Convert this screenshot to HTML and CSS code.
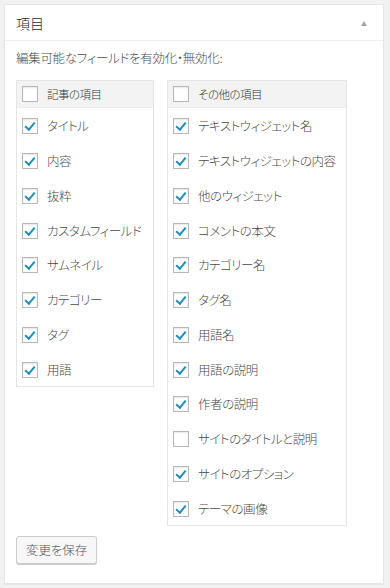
FILE: index.html
```html
<!DOCTYPE html>
<html lang="ja">
<head>
<meta charset="utf-8">
<link rel="stylesheet" href="styles.css">
</head>
<body>
<div class="postbox">
  <div class="postbox-header">
    <h2 class="postbox-title">項目</h2>
    <span class="toggle-arrow"></span>
  </div>
  <div class="postbox-inside">
    <p class="field-label">編集可能なフィールドを有効化・無効化:</p>
    <div class="tables">
      <div class="field-table table-left">
        <div class="table-head"><span class="cb"></span><span class="head-text">記事の項目</span></div>
        <div class="table-body">
          <div class="row"><span class="cb checked"></span><span class="row-text">タイトル</span></div>
          <div class="row"><span class="cb checked"></span><span class="row-text">内容</span></div>
          <div class="row"><span class="cb checked"></span><span class="row-text">抜粋</span></div>
          <div class="row"><span class="cb checked"></span><span class="row-text">カスタムフィールド</span></div>
          <div class="row"><span class="cb checked"></span><span class="row-text">サムネイル</span></div>
          <div class="row"><span class="cb checked"></span><span class="row-text">カテゴリー</span></div>
          <div class="row"><span class="cb checked"></span><span class="row-text">タグ</span></div>
          <div class="row"><span class="cb checked"></span><span class="row-text">用語</span></div>
        </div>
      </div>
      <div class="field-table table-right">
        <div class="table-head"><span class="cb"></span><span class="head-text">その他の項目</span></div>
        <div class="table-body">
          <div class="row"><span class="cb checked"></span><span class="row-text">テキストウィジェット名</span></div>
          <div class="row"><span class="cb checked"></span><span class="row-text">テキストウィジェットの内容</span></div>
          <div class="row"><span class="cb checked"></span><span class="row-text">他のウィジェット</span></div>
          <div class="row"><span class="cb checked"></span><span class="row-text">コメントの本文</span></div>
          <div class="row"><span class="cb checked"></span><span class="row-text">カテゴリー名</span></div>
          <div class="row"><span class="cb checked"></span><span class="row-text">タグ名</span></div>
          <div class="row"><span class="cb checked"></span><span class="row-text">用語名</span></div>
          <div class="row"><span class="cb checked"></span><span class="row-text">用語の説明</span></div>
          <div class="row"><span class="cb checked"></span><span class="row-text">作者の説明</span></div>
          <div class="row"><span class="cb"></span><span class="row-text">サイトのタイトルと説明</span></div>
          <div class="row"><span class="cb checked"></span><span class="row-text">サイトのオプション</span></div>
          <div class="row"><span class="cb checked"></span><span class="row-text">テーマの画像</span></div>
        </div>
      </div>
    </div>
    <button class="button" type="button">変更を保存</button>
  </div>
</div>
</body>
</html>
```
FILE: styles.css
```css
html, body {
  margin: 0;
  padding: 0;
  background: #f1f1f1;
}
body {
  padding: 4px 6px 4px 4px;
  font-family: "Noto Sans CJK JP", "Noto Sans", sans-serif;
  font-feature-settings: "palt";
  font-weight: 300;
  color: #4a4a4a;
  font-size: 13px;
}
.postbox {
  background: #fff;
  border: 1px solid #e5e5e5;
  box-shadow: 0 1px 1px rgba(0,0,0,.04);
}
.postbox-header {
  height: 35px;
  display: flex;
  align-items: center;
  justify-content: space-between;
  padding: 0 16px 0 11px;
  border-bottom: 1px solid #eee;
}
.postbox-title {
  margin: 0;
  font-size: 14px;
  font-weight: 300;
  line-height: 20px;
  color: #23282d;
}
.toggle-arrow {
  width: 0;
  height: 0;
  border-left: 3.5px solid transparent;
  border-right: 3.5px solid transparent;
  border-bottom: 5px solid #a0a5aa;
  margin-top: 1px;
}
.postbox-inside {
  padding: 7px 11px 19px 11px;
}
.field-label {
  margin: 0 0 12px 0;
  line-height: 20px;
  font-size: 12.5px;
  letter-spacing: -0.3px;
}
.tables {
  display: flex;
  align-items: flex-start;
  gap: 13px;
}
.field-table {
  border: 1px solid #e5e5e5;
  box-sizing: border-box;
}
.table-left { width: 138px; }
.table-right { width: 180px; }
.table-head {
  height: 26px;
  background: #f3f3f3;
  border-bottom: 1px solid #ececec;
  display: flex;
  align-items: center;
  padding-left: 5px;
}
.head-text {
  font-size: 11.5px;
  line-height: 16px;
  letter-spacing: -0.5px;
  color: #32373c;
}
.row {
  height: 34.75px;
  box-sizing: border-box;
  padding: 2px 0 0 5px;
  display: flex;
  align-items: center;
}
.row-text {
  font-size: 12.5px;
  line-height: 18px;
  letter-spacing: -0.45px;
  white-space: nowrap;
}
.cb {
  flex: none;
  width: 16px;
  height: 16px;
  box-sizing: border-box;
  border: 1px solid #b4b9be;
  background: #fff;
  box-shadow: inset 0 1px 2px rgba(0,0,0,.1);
  margin-right: 9px;
  position: relative;
}
.cb.checked::after {
  content: "";
  position: absolute;
  left: 4px;
  top: 1px;
  width: 3.5px;
  height: 8px;
  border-right: 2.6px solid #1e8cbe;
  border-bottom: 2.6px solid #1e8cbe;
  transform: rotate(40deg);
  transform-origin: center;
}
.button {
  display: block;
  margin-top: 10px;
  height: 28px;
  padding: 0 9px 1px;
  font-family: "Noto Sans CJK JP", "Noto Sans", sans-serif;
  font-feature-settings: "palt";
  font-weight: 300;
  font-size: 12.5px;
  letter-spacing: -0.1px;
  line-height: 26px;
  color: #555;
  background: #f7f7f7;
  border: 1px solid #ccc;
  border-radius: 3px;
  box-shadow: 0 1px 0 #ccc;
}
```
